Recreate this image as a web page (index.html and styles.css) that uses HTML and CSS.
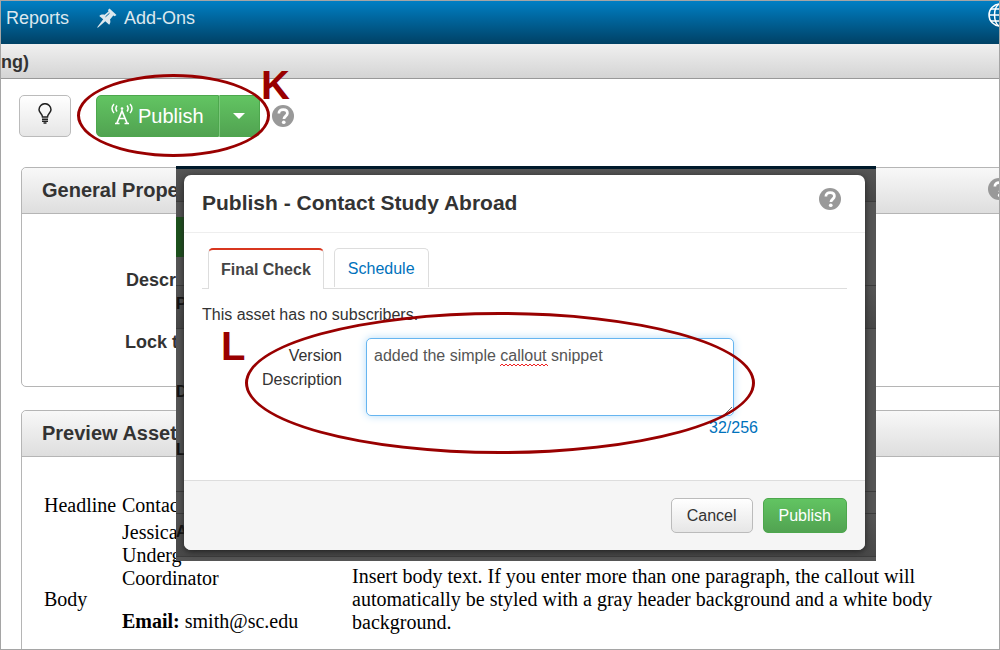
FILE: index.html
```html
<!DOCTYPE html>
<html lang="en">
<head>
  <meta charset="UTF-8" />
  <meta name="viewport" content="width=device-width, initial-scale=1.0" />
  <title>Publish - Contact Study Abroad</title>
  <link rel="stylesheet" href="styles.css">
</head>
<body>
  <svg class="sprite" aria-hidden="true">
    <symbol id="help" viewBox="0 0 24 24">
      <circle cx="12" cy="12" r="12" fill="#999"/>
      <path d="M7.500 9.200C7.500 6.400 9.500 5 12.200 5s4.600 1.500 4.600 4c0 3-3.800 3.200-3.800 6.300" fill="none" stroke="#fff" stroke-width="3"/>
      <circle cx="12.800" cy="18.800" r="2" fill="#fff"/>
    </symbol>
  </svg>

  <div class="app">
    <nav class="navbar">
      <a href="#">Reports</a>
      <a href="#">
        <svg width="20" height="20" viewBox="0 0 20 20" aria-hidden="true">
          <path d="M12.500 0.500L19.500 7l-1.800 1.200-1.400-.6-3.300 4c.7 2 .5 3.700-.8 5.200L8.300 13.200.8 19.800l-.6-.6L6.200 11.200 2.300 8c1.300-1.300 3.200-1.700 5.300-1.200l3.900-3.200-.5-1.700z" fill="#dde8ee"/>
          <path d="M8.500 8.800l4-3.600" stroke="#00679f" stroke-width="1" fill="none"/>
        </svg>
        Add-Ons
      </a>
      <svg class="globe" width="24" height="24" viewBox="0 0 24 24" fill="none" stroke="#fff" stroke-width="1.500" aria-hidden="true">
        <circle cx="12" cy="12" r="11"/>
        <ellipse cx="12" cy="12" rx="5.500" ry="11"/>
        <path d="M12 1v22M1 12h22M3 6h18M3 18h18"/>
      </svg>
    </nav>

    <div class="subbar">ng)</div>

    <div class="toolbar">
      <button class="btn btn-tip" aria-label="Tips">
        <svg width="16" height="26" viewBox="0 0 16 26" fill="none" stroke="#222" stroke-width="1.500" aria-hidden="true">
          <path d="M5.500 14c0-3-3.500-4.500-3.500-7.300a6 6 0 0 1 12 0c0 2.800-3.500 4.300-3.500 7.300z"/>
          <path d="M5 16.200h6M5 18.200h6M6.500 20h3"/>
        </svg>
      </button>
      <div class="btn-group">
        <button class="btn btn-green">
          <svg width="22" height="26" viewBox="0 0 22 26" fill="none" stroke="#fff" stroke-width="1.500" aria-hidden="true">
            <path d="M3 1C.4 4 .4 7 3 10M6 2.500c-1.500 2-1.500 4 0 6M19 1c2.600 3 2.600 6 0 9M16 2.500c1.500 2 1.500 4 0 6"/>
            <path d="M4 20.500h4.500M13.500 20.500H18M6 20L11 8l5 12M8 15.500h6" stroke-width="1.700"/>
            <circle cx="11" cy="5.500" r="1.300" fill="#fff" stroke="none"/>
          </svg>
          Publish
        </button>
        <button class="btn btn-green btn-caret" aria-label="More publish options"><span class="caret"></span></button>
      </div>
      <svg class="help" aria-label="Help"><use href="#help"/></svg>
    </div>

    <section class="panel general">
      <header>
        <h2>General Properties</h2>
        <svg class="help" aria-label="Help"><use href="#help"/></svg>
      </header>
      <dl>
        <dt>Description</dt>
        <dt>Lock to site</dt>
      </dl>
    </section>

    <section class="panel preview">
      <header><h2>Preview Asset</h2></header>
      <table>
        <tr>
          <td>Headline</td>
          <td>Contact</td>
          <td></td>
        </tr>
        <tr class="body-row">
          <td>Body</td>
          <td class="contact">
            <p>Jessica<br>Underg<br>Coordinator</p>
            <p><b>Email:</b> smith@sc.edu</p>
          </td>
          <td>Insert body text. If you enter more than one paragraph, the callout will automatically be styled with a gray header background and a white body background.</td>
        </tr>
      </table>
    </section>

    <div class="backdrop">
      <!-- dimmed page behind the dialog -->
      <div class="dimmed" aria-hidden="true">
        <div class="bar"></div>
        <div class="dim-toolbar"><span></span></div>
        <div class="bar">P</div>
        <div class="dim-fields"><span>D</span><span>L</span></div>
        <div></div>
        <div class="bar">A</div>
        <div></div>
      </div>
      <div class="dialog" role="dialog" aria-labelledby="dialog-title">
        <header>
          <h1 id="dialog-title">Publish - Contact Study Abroad</h1>
          <svg class="help" aria-label="Help"><use href="#help"/></svg>
        </header>
        <div class="dialog-body">
          <div class="tabs">
            <a class="tab active" href="#">Final Check</a>
            <a class="tab" href="#">Schedule</a>
          </div>
          <p>This asset has no subscribers.</p>
          <div class="field">
            <label for="version">Version Description</label>
            <div class="control">
              <textarea id="version" spellcheck="false">added the simple callout snippet</textarea>
              <svg class="misspelled" width="48" height="4" viewBox="0 0 48 4" fill="none" stroke="#e22" aria-hidden="true">
                <path d="M0 3l2-2 2 2 2-2 2 2 2-2 2 2 2-2 2 2 2-2 2 2 2-2 2 2 2-2 2 2 2-2 2 2 2-2 2 2 2-2 2 2 2-2 2 2 2-2 2 2"/>
              </svg>
              <span class="counter">32/256</span>
            </div>
          </div>
        </div>
        <footer>
          <button class="btn">Cancel</button>
          <button class="btn btn-green">Publish</button>
        </footer>
      </div>
    </div>

    <!-- callouts -->
    <div class="ring ring-k"></div>
    <span class="mark mark-k">K</span>
    <div class="ring ring-l"></div>
    <span class="mark mark-l">L</span>
  </div>
</body>
</html>
```
FILE: styles.css
```css
* {
  box-sizing: border-box;
}

body {
  margin: 0;
  font-family: "Liberation Sans", Arial, sans-serif;
  font-size: 16px;
  color: #333;
  background: #fff;
}

h1, h2, p, dl, dd {
  margin: 0;
}

button, textarea {
  font: inherit;
  color: inherit;
}

.sprite {
  position: absolute;
  width: 0;
  height: 0;
}

.help {
  width: 22px;
  height: 22px;
  flex: none;
}

.app {
  position: relative;
  height: 100vh;
  overflow: hidden;
  border: 1px solid #a5a5a5;
}

/* Top bars */
.navbar {
  display: flex;
  align-items: flex-start;
  gap: 28px;
  height: 43px;
  padding: 6px 0 0 5px;
  background: linear-gradient(#007fc4, #004165);
}

.navbar a {
  display: flex;
  align-items: center;
  gap: 7px;
  font-size: 18px;
  line-height: 22px;
  color: #dde8ee;
  text-decoration: none;
}

.globe {
  flex: none;
  margin: -4px -13px 0 auto;
}

.subbar {
  height: 35px;
  font-size: 18px;
  line-height: 36px;
  font-weight: bold;
  border-bottom: 1px solid #999;
  background: linear-gradient(#f0f0f0, #d4d4d4);
}

.toolbar {
  display: flex;
  align-items: center;
  height: 88px;
  padding: 0 18px 14px;
}

/* Buttons */
.btn {
  display: flex;
  align-items: center;
  justify-content: center;
  height: 35px;
  padding: 0 15px;
  border: 1px solid #bbb;
  border-radius: 5px;
  background: linear-gradient(#fff, #e6e6e6);
}

.btn-green {
  color: #fff;
  border-color: #4da74d;
  background: linear-gradient(#62c462, #51a351);
}

.toolbar .btn {
  height: 42px;
}

.btn-tip {
  width: 52px;
}

.btn-group {
  display: flex;
  margin: 0 12px 0 25px;
}

.btn-group .btn {
  gap: 5px;
  padding: 0 14px;
  font-size: 20px;
  border-radius: 5px 0 0 5px;
}

.btn-group .btn-caret {
  width: 41px;
  padding: 0;
  border-left-color: #7bc77b;
  border-radius: 0 5px 5px 0;
}

.caret {
  border: 6px solid transparent;
  border-top-color: #fff;
  border-bottom: 0;
}

/* Panels */
.panel {
  margin: 0 -20px 23px 20px;
  border: 1px solid #b5b5b5;
  border-radius: 5px;
}

.panel header {
  display: flex;
  align-items: center;
  justify-content: space-between;
  height: 46px;
  padding: 0 8px 4px 20px;
  border-bottom: 1px solid #b5b5b5;
  border-radius: 5px 5px 0 0;
  background: linear-gradient(#f8f8f8, #dedede);
}

.panel h2 {
  padding-top: 4px;
  font-size: 20px;
}

.general {
  height: 220px;
}

.general dl {
  display: grid;
  gap: 38px;
  width: 203px;
  padding-top: 54px;
}

.general dt {
  font-size: 18px;
  line-height: 24px;
  font-weight: bold;
  text-align: right;
}

.preview table {
  width: 920px;
  margin: 34px 0 0 19px;
  border-spacing: 2px;
  font: 20px/23px "Liberation Serif", "Times New Roman", serif;
  color: #000;
}

.preview td {
  padding: 1px;
}

.preview td:nth-child(1) {
  width: 76px;
}

.preview td:nth-child(2) {
  width: 228px;
}

.preview td:nth-child(3) {
  padding-right: 16px;
}

.body-row {
  height: 158px;
}

.preview .contact {
  vertical-align: top;
}

.contact p {
  margin-bottom: 20px;
}

/* Dialog */
.backdrop {
  position: absolute;
  top: 165px;
  left: 175px;
  width: 700px;
  padding: 6px 11px 11px 8px;
  border-top: 3px solid #001a2b;
  background: #555;
}

.dimmed {
  position: absolute;
  inset: 0;
  display: grid;
  grid-template-rows: 33px 84px 43px 163px 22px 43px 1fr;
  overflow: hidden;
  font-weight: bold;
  line-height: 36px;
  color: #111;
}

.dimmed > div {
  border-bottom: 1px solid #3c3c3c;
}

.dimmed > :last-child {
  border-bottom: 0;
}

.dimmed .bar {
  background: linear-gradient(#555, #484848);
}

.dim-toolbar span {
  display: block;
  width: 30px;
  height: 40px;
  margin-top: 15px;
  background: #1d521d;
}

.dim-fields {
  display: grid;
  align-content: start;
  gap: 22px;
  padding-top: 45px;
}

.dialog {
  position: relative;
  border-radius: 7px;
  background: #fff;
  box-shadow: 0 2px 6px #222;
}

.dialog header {
  display: flex;
  justify-content: space-between;
  padding: 13px 24px 14px 18px;
  border-bottom: 1px solid #eee;
}

.dialog h1 {
  font-size: 21px;
  line-height: 30px;
}

.dialog-body {
  height: 247px;
  padding: 15px 18px 0;
}

.tabs {
  display: flex;
  gap: 10px;
  padding-left: 6px;
  border-bottom: 1px solid #ddd;
}

.tab {
  height: 39px;
  padding: 0 13px;
  line-height: 40px;
  color: #0072bc;
  text-decoration: none;
  border: 1px solid #ddd;
  border-bottom: 0;
  border-radius: 5px 5px 0 0;
}

.tab.active {
  height: 41px;
  margin-bottom: -1px;
  padding: 0 12px;
  font-weight: bold;
  color: #444;
  border-top: 2px solid #d8361f;
  background: #fff;
}

.dialog-body p {
  margin-top: 14px;
  line-height: 24px;
}

.field {
  display: flex;
  gap: 24px;
  margin-top: 11px;
}

.field label {
  width: 140px;
  padding: 6px 0 0 50px;
  line-height: 24px;
  text-align: right;
}

.control {
  position: relative;
  width: 368px;
}

.control textarea {
  display: block;
  width: 100%;
  height: 78px;
  padding: 5px 7px;
  line-height: 24px;
  color: #555;
  border: 1px solid #66b5f0;
  border-radius: 5px;
  outline: 0;
  box-shadow: 0 0 8px #b5dcf8;
}

.misspelled {
  position: absolute;
  top: 25px;
  left: 134px;
}

.counter {
  display: block;
  margin-right: -24px;
  line-height: 24px;
  text-align: right;
  color: #0072bc;
}

.dialog footer {
  display: flex;
  justify-content: flex-end;
  gap: 10px;
  padding: 17px 18px;
  border-top: 1px solid #ddd;
  border-radius: 0 0 7px 7px;
  background: #f5f5f5;
}

/* Callouts drawn over the page */
.ring {
  position: absolute;
  border: 3px solid #900;
  border-radius: 50%;
}

.ring-k {
  top: 73px;
  left: 76px;
  width: 193px;
  height: 83px;
}

.ring-l {
  top: 311px;
  left: 244px;
  width: 510px;
  height: 142px;
}

.mark {
  position: absolute;
  font-size: 40px;
  line-height: 40px;
  font-weight: bold;
  color: #900;
}

.mark-k {
  top: 64px;
  left: 260px;
}

.mark-l {
  top: 325px;
  left: 220px;
}
```
